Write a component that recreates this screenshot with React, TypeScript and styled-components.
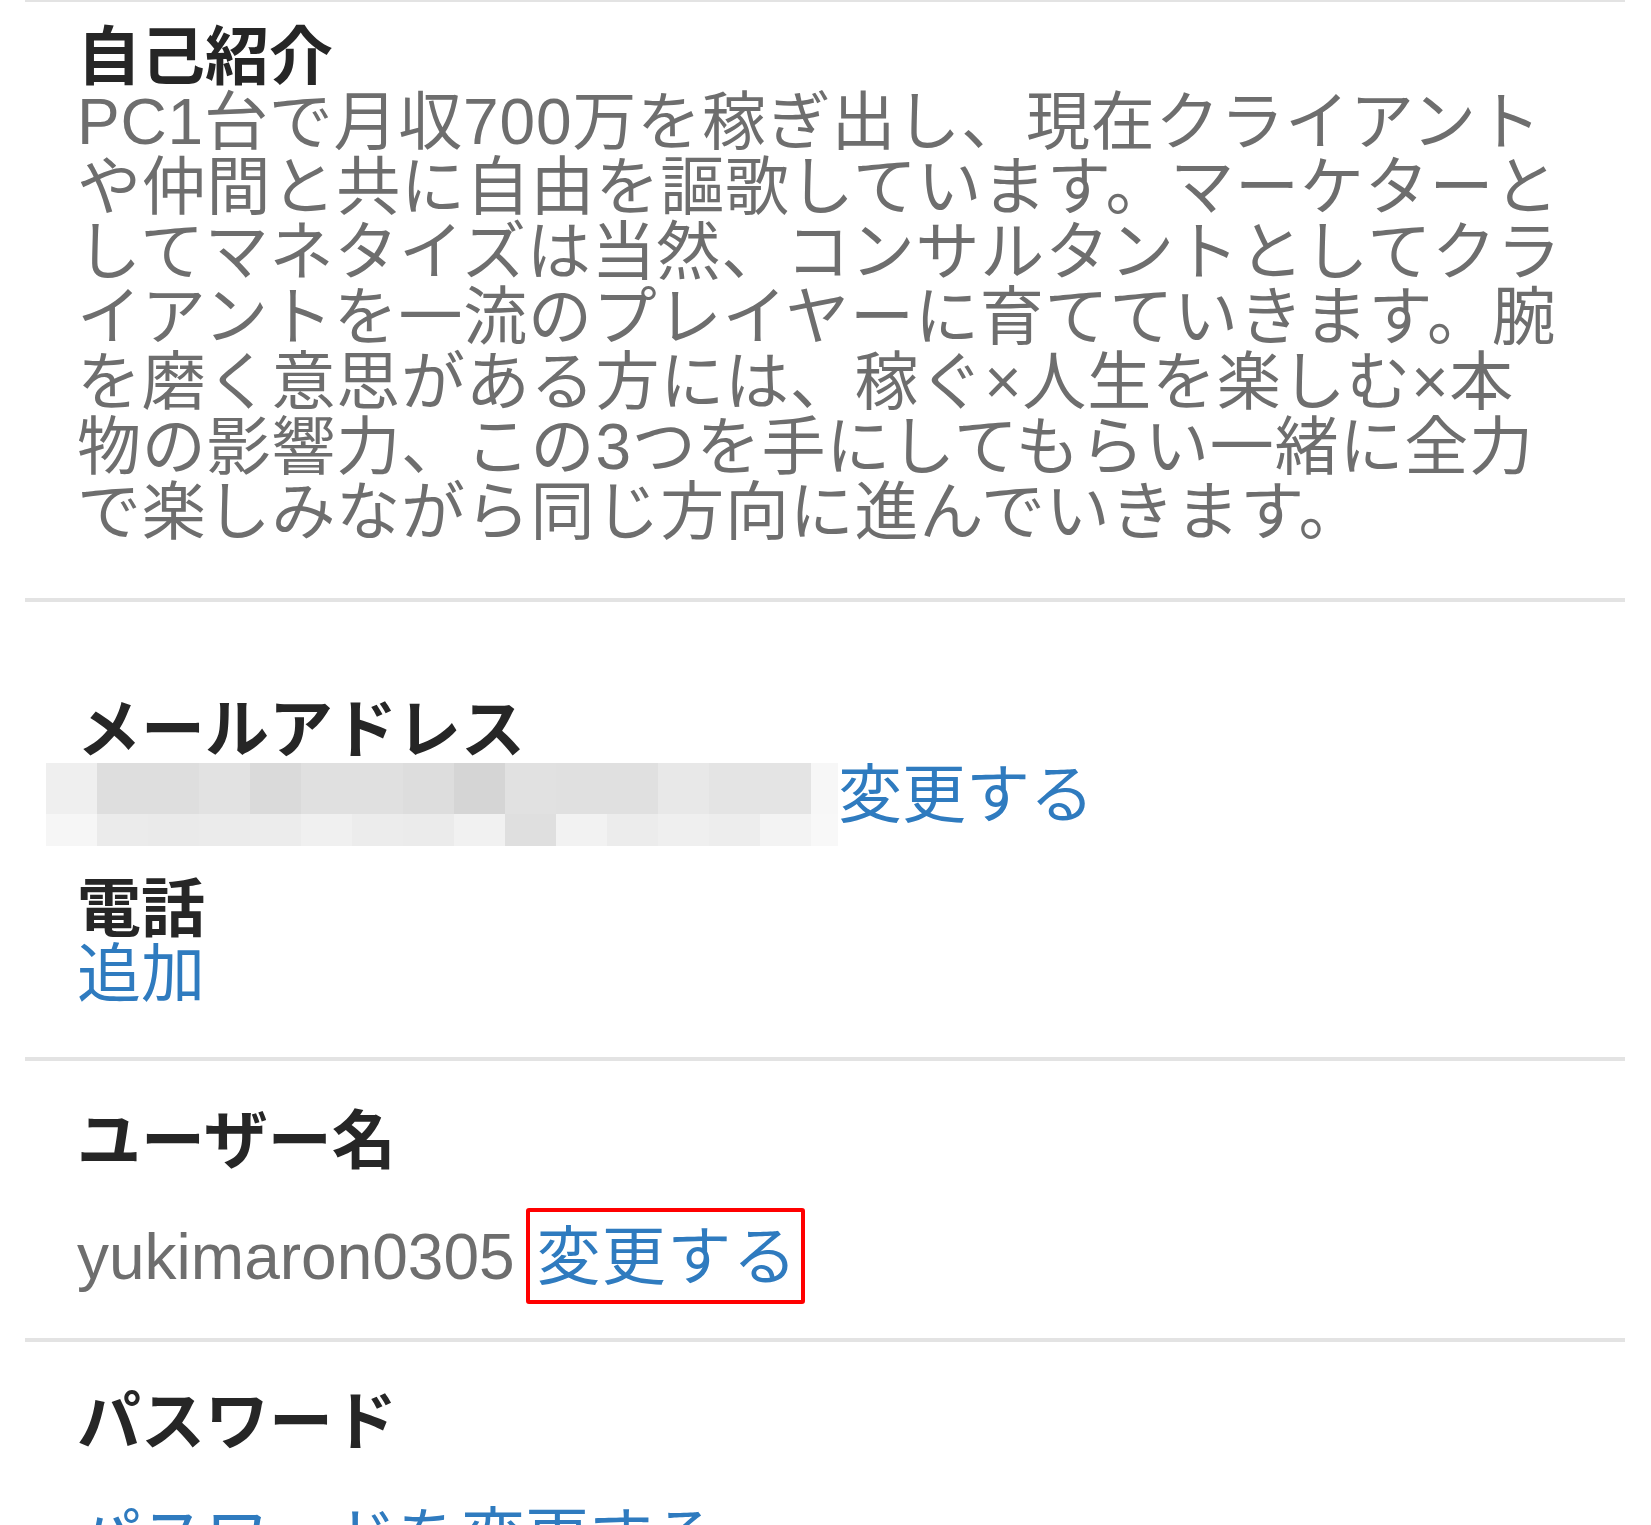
import styled, { createGlobalStyle } from 'styled-components';

const GlobalStyle = createGlobalStyle`
  html, body {
    margin: 0;
    background: #ffffff;
    overflow: hidden;
  }
  body {
    font-family: "Liberation Sans", "Noto Sans CJK JP", sans-serif;
    font-size: 64px;
    line-height: 65px;
  }
`;

const Page = styled.div`
  margin: 0 26px 0 25px;
`;

const Section = styled.section<{ $top: number; $bottom: number; $line?: number }>`
  border-top: ${(p) => p.$line ?? 4}px solid #e3e3e3;
  padding: ${(p) => p.$top}px 0 ${(p) => p.$bottom}px 52px;
`;

const Field = styled.div<{ $space?: number }>`
  margin-top: ${(p) => p.$space ?? 0}px;
`;

const Label = styled.div`
  font-weight: 700;
  color: #262626;
`;

const Value = styled.div<{ $gap?: number }>`
  margin-top: ${(p) => p.$gap ?? 0}px;
  color: #6e6e6e;
  white-space: nowrap;
`;

const Bio = styled.p`
  margin: 0;
  color: #6e6e6e;
  letter-spacing: 0.8px;
  white-space: nowrap;
`;

const EmailRow = styled.div`
  display: flex;
  align-items: flex-start;
  margin-left: -31px;
`;

const Mosaic = styled.svg`
  display: block;
  flex: none;
`;

const Action = styled.a`
  color: #2f7bbf;
  text-decoration: none;
  cursor: pointer;
`;

const Marked = styled(Action)`
  position: relative;
  display: inline-block;
  letter-spacing: 1.5px;
  margin-left: 4px;
  &::after {
    content: '';
    position: absolute;
    left: -10px;
    right: -7px;
    top: -17px;
    bottom: -14px;
    border: 4px solid #ff0000;
    border-radius: 3px;
  }
`;

const topRow = [
  '#efefef', '#dedede', '#dedede', '#e2e2e2', '#dadada', '#e0e0e0', '#e0e0e0', '#dddddd',
  '#d5d5d5', '#e1e1e1', '#e0e0e0', '#e0e0e0', '#e8e8e8', '#e4e4e4', '#e4e4e4', '#f7f7f7',
];
const bottomRow = [
  '#f6f6f6', '#ebebeb', '#eaeaea', '#ebebeb', '#ececec', '#f0f0f0', '#ececec', '#ebebeb',
  '#f1f1f1', '#dfdfdf', '#f2f2f2', '#ececec', '#efefef', '#ededed', '#f3f3f3', '#f8f8f8',
];

function BlurredAddress() {
  const cell = 51;
  return (
    <Mosaic width={792} height={83} viewBox="0 0 792 83">
      {topRow.map((c, i) => (
        <rect key={'t' + i} x={i * cell} y={0} width={i === 15 ? 27 : cell} height={51} fill={c} />
      ))}
      {bottomRow.map((c, i) => (
        <rect key={'b' + i} x={i * cell} y={51} width={i === 15 ? 27 : cell} height={32} fill={c} />
      ))}
    </Mosaic>
  );
}

const bio = [
  'PC1台で月収700万を稼ぎ出し、現在クライアント',
  'や仲間と共に自由を謳歌しています。マーケターと',
  'してマネタイズは当然、コンサルタントとしてクラ',
  'イアントを一流のプレイヤーに育てていきます。腕',
  'を磨く意思がある方には、稼ぐ×人生を楽しむ×本',
  '物の影響力、この3つを手にしてもらい一緒に全力',
  'で楽しみながら同じ方向に進んでいきます。',
];

export default function App() {
  return (
    <>
      <GlobalStyle />
      <Page>
        <Section $line={2} $top={23} $bottom={53}>
          <Label>自己紹介</Label>
          <Bio>
            {bio.map((line, i) => (
              <span key={i}>
                {line}
                {i < bio.length - 1 && <br />}
              </span>
            ))}
          </Bio>
        </Section>

        <Section $top={96} $bottom={50}>
          <Field>
            <Label>メールアドレス</Label>
            <EmailRow>
              <BlurredAddress />
              <Action>変更する</Action>
            </EmailRow>
          </Field>
          <Field $space={31}>
            <Label>電話</Label>
            <Value>
              <Action>追加</Action>
            </Value>
          </Field>
        </Section>

        <Section $top={48} $bottom={48}>
          <Label>ユーザー名</Label>
          <Value $gap={51}>
            yukimaron0305 <Marked>変更する</Marked>
          </Value>
        </Section>

        <Section $top={48} $bottom={48}>
          <Label>パスワード</Label>
          <Value $gap={51}>
            <Action>パスワードを変更する</Action>
          </Value>
        </Section>
      </Page>
    </>
  );
}
